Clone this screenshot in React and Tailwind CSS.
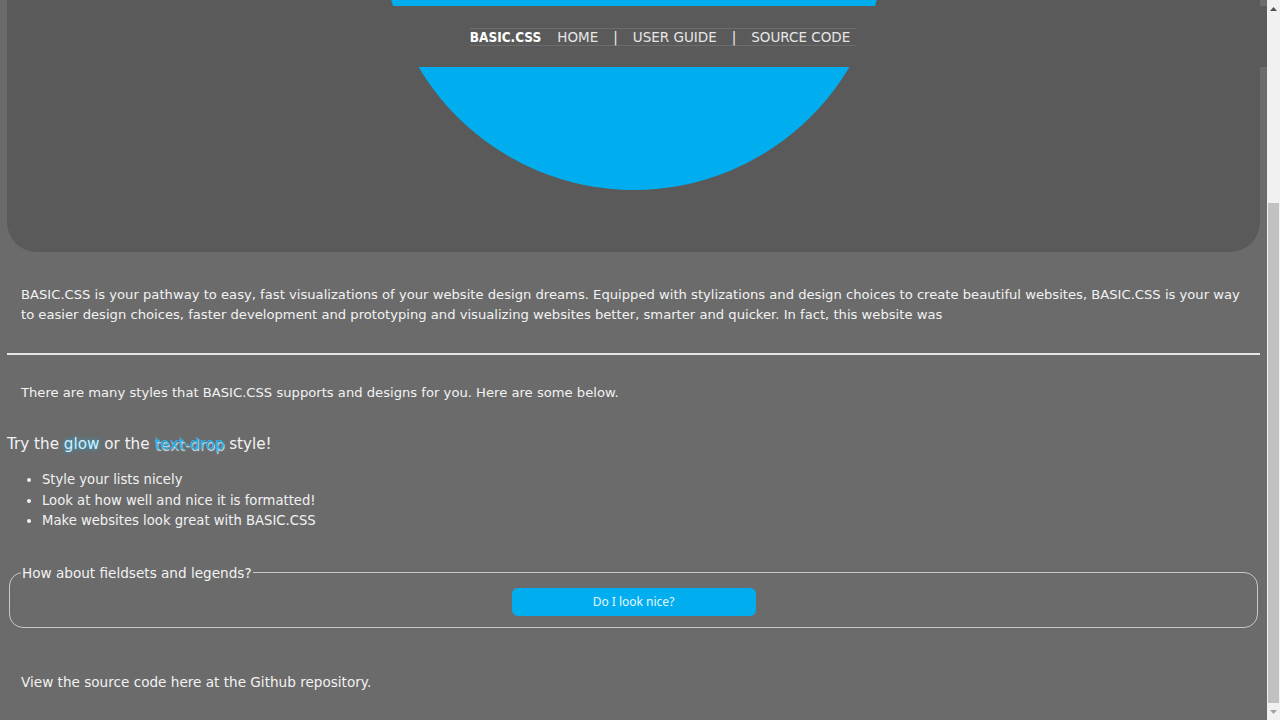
import React from "react";

const navLinks = ["HOME", "USER GUIDE", "SOURCE CODE"];

const listItems = [
  "Style your lists nicely",
  "Look at how well and nice it is formatted!",
  "Make websites look great with BASIC.CSS",
];

// Browser-style scrollbar, page is scrolled to the bottom
function Scrollbar() {
  return (
    <div className="flex w-[13px] shrink-0 flex-col bg-[#f1f1f1]">
      <div className="flex h-[17px] items-center justify-center">
        <svg width="7" height="4" viewBox="0 0 7 4">
          <path d="M3.5 0 L7 4 L0 4 Z" fill="#505050" />
        </svg>
      </div>
      <div className="flex flex-1 flex-col">
        <div className="h-[186px]" />
        <div className="mx-[1px] flex-1 bg-[#c1c1c1]" />
      </div>
      <div className="flex h-[17px] items-center justify-center">
        <svg width="7" height="4" viewBox="0 0 7 4">
          <path d="M0 0 L7 0 L3.5 4 Z" fill="#a3a3a3" />
        </svg>
      </div>
    </div>
  );
}

export default function App() {
  return (
    <div className="flex h-screen overflow-hidden bg-[#6b6b6b]">
      <div className="relative min-w-0 flex-1 font-['DejaVu_Sans',sans-serif] text-[#f2f2f2]">
        <nav className="absolute left-[7px] right-0 top-[6px] z-10 flex h-[61px] items-center justify-center bg-[#5a5a5a] pl-[52px]">
          <ul className="flex items-center gap-[15px] border-y border-[#6c6c6c] pr-[6px] text-[13.5px] leading-[16px]">
            <li className="mr-px font-['DejaVu_Sans_Condensed','Liberation_Sans',sans-serif] text-[13.5px] font-bold text-white">
              BASIC.CSS
            </li>
            {navLinks.map((link, i) => (
              <React.Fragment key={link}>
                {i > 0 && <li className="text-[#eeeeee]">|</li>}
                <li className="text-[#e6e6e6]">{link}</li>
              </React.Fragment>
            ))}
          </ul>
        </nav>

        <header className="relative mx-[7px] h-[252px] overflow-hidden rounded-b-[30px] bg-[#5a5a5a]">
          <div className="absolute left-1/2 top-[-310px] h-[500px] w-[500px] -translate-x-1/2 rounded-full bg-[#00aeef]" />
        </header>

        <main className="px-[7px]">
          <p className="mt-[33px] px-[14px] text-[13.15px] leading-[20px]">
            BASIC.CSS is your pathway to easy, fast visualizations of your website design dreams. Equipped with
            stylizations and design choices to create beautiful websites, BASIC.CSS is your way to easier design
            choices, faster development and prototyping and visualizing websites better, smarter and quicker. In fact,
            this website was
          </p>

          <hr className="mt-[28px] border-t-2 border-[#e6e6e6]" />

          <p className="mt-[28px] px-[14px] text-[13.15px] leading-[20px]">
            There are many styles that BASIC.CSS supports and designs for you. Here are some below.
          </p>

          <h3 className="mt-[29px] text-[15.2px] leading-[24px]">
            Try the <span className="text-[#d2f0fb] [text-shadow:0_0_5px_#14b4f0]">glow</span> or the{" "}
            <span className="text-[#22b2ea] [text-shadow:1px_2px_1px_#c4ecfa]">text-drop</span> style!
          </h3>

          <ul className="mt-[14px] list-disc pl-[35px] text-[13.2px] leading-[20.5px]">
            {listItems.map((item) => (
              <li key={item}>{item}</li>
            ))}
          </ul>

          <fieldset className="mx-[2px] mt-[32px] rounded-[14px] border border-[#c8c8c8] px-[11px] pb-[11px] pt-[6px]">
            <legend className="px-[1px] text-[13.6px] leading-[18px]">How about fieldsets and legends?</legend>
            <div className="flex justify-center">
              <button className="h-[28px] w-[244px] rounded-[6px] bg-[#00aeef] font-['Noto_Sans',sans-serif] text-[12px] text-[#e3f6fd]">
                Do I look nice?
              </button>
            </div>
          </fieldset>

          <p className="mt-[44px] px-[14px] text-[13.6px] leading-[20px]">
            View the source code here at the Github repository.
          </p>
        </main>
      </div>
      <Scrollbar />
    </div>
  );
}
